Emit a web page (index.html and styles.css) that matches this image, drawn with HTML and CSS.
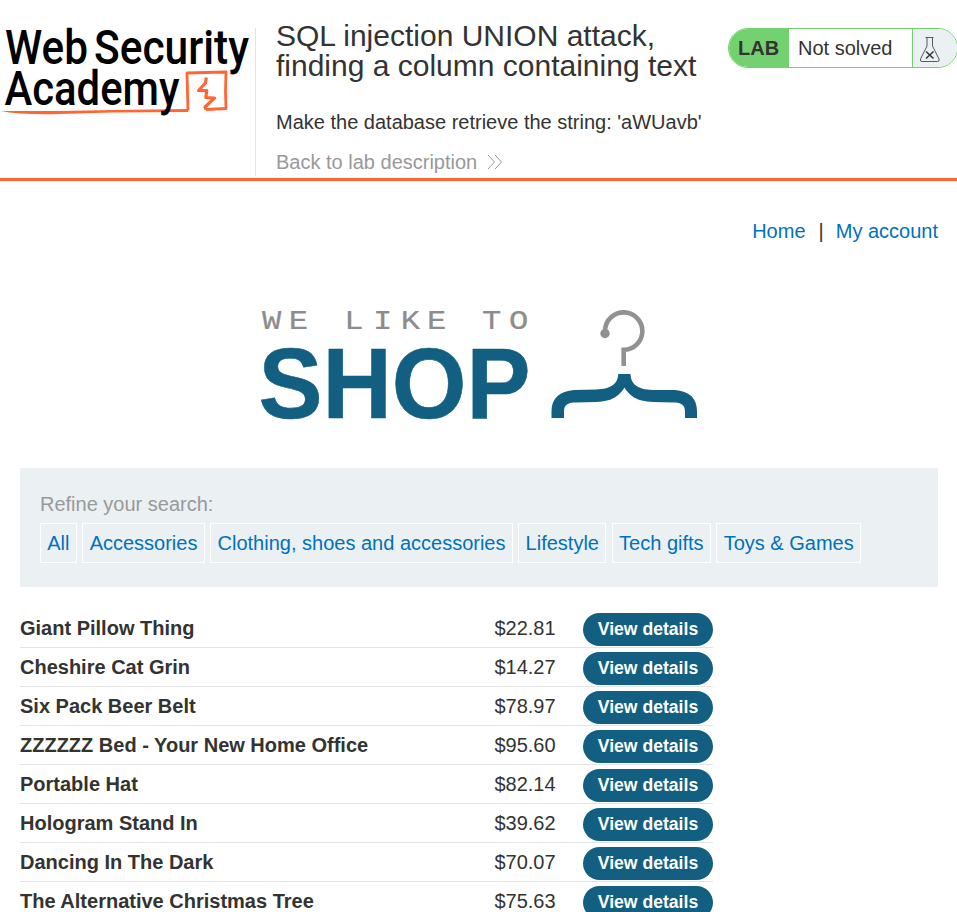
FILE: index.html
```
<!DOCTYPE html>
<html lang="en">
<head>
<meta charset="utf-8">
<title>SQL injection UNION attack, finding a column containing text</title>
<link rel="stylesheet" href="styles.css">
</head>
<body>
<header class="lab-header">
  <svg class="academy-logo" viewBox="0 0 255 100" role="img" aria-label="Web Security Academy">
    <path class="logo-line" d="M188 82.500L187 45L226 44L225.500 63L226 80.500L206 81.500"/>
    <path class="logo-tail" d="M1 83Q20 83 60 83L112 82L188 81V84L112 84.500L60 86Q20 87 1 83Z"/>
    <path class="logo-zag" d="M206.300 49.500L205.500 55L198.500 62.500L206.800 62.500L205.800 69.500L214.500 70.200L205 79L206 81.700"/>
    <g class="logo-text">
      <text x="5" y="36" textLength="83" lengthAdjust="spacingAndGlyphs">Web</text>
      <text x="94" y="36" textLength="155" lengthAdjust="spacingAndGlyphs">Security</text>
      <text x="4.500" y="77" textLength="175" lengthAdjust="spacingAndGlyphs">Academy</text>
    </g>
  </svg>
  <div class="lab-title">
    <h2>SQL injection UNION attack,<br>finding a column containing text</h2>
    <p class="hint">Make the database retrieve the string: 'aWUavb'</p>
    <a class="back">Back to lab description
      <svg viewBox="0 0 16 16"><path d="M1 1L7.500 8L1 15M8 1L14.500 8L8 15"/></svg>
    </a>
  </div>
  <div class="status">
    <span class="status-lab">LAB</span>
    <span class="status-text">Not solved</span>
    <span class="status-icon"><svg viewBox="0 0 22 28"><path class="flask" d="M6.500 1.500H14.500M8 2V10L1.500 23Q.7 25.500 3 25.500H18.500Q20.800 25.500 20 23L13.500 10V2"/><path class="cross" d="M7 15.500L14.500 22.500M14.500 15.500L7 22.500"/></svg></span>
  </div>
</header>
<main>
  <nav class="top-links"><a>Home</a><span>|</span><a>My account</a></nav>
  <svg class="shop-logo" viewBox="0 0 440 112">
    <text class="tagline" transform="scale(1.15 1)" y="20.800" x="1.800 25 42 73.300 98.300 122.300 145.300 163 193 216.500">WE LIKE TO</text>
    <text class="shop" x="-1.500" y="110" textLength="272" lengthAdjust="spacingAndGlyphs">SHOP</text>
    <path class="hook" d="M345 26V22.500A18.700 18.700 0 1 1 363.700 41.800V58"/>
    <circle class="hook-tip" cx="345" cy="25.500" r="4.700"/>
    <path class="hanger" d="M358.200 66H370.500C371 76 377 81.500 393 82L415 82C429 83 437 90 437 103V110H425V104C425 97 422 94.500 413 94.500L393 94C376 93.500 369 87 364.500 79.500C360 87 353 93.500 336 94L316 94.500C307 94.500 304 97 304 104V110H291.500V103C291.500 90 300 83 314 82L336 81.500C352 81 358 75 358.200 66Z"/>
  </svg>
  <section class="filters">
    <label>Refine your search:</label>
    <div class="filter-list"><a>All</a><a>Accessories</a><a>Clothing, shoes and accessories</a><a>Lifestyle</a><a>Tech gifts</a><a>Toys &amp; Games</a></div>
  </section>
  <section class="products">
    <div class="row"><b>Giant Pillow Thing</b><span>$22.81</span><a>View details</a></div>
    <div class="row"><b>Cheshire Cat Grin</b><span>$14.27</span><a>View details</a></div>
    <div class="row"><b>Six Pack Beer Belt</b><span>$78.97</span><a>View details</a></div>
    <div class="row"><b>ZZZZZZ Bed - Your New Home Office</b><span>$95.60</span><a>View details</a></div>
    <div class="row"><b>Portable Hat</b><span>$82.14</span><a>View details</a></div>
    <div class="row"><b>Hologram Stand In</b><span>$39.62</span><a>View details</a></div>
    <div class="row"><b>Dancing In The Dark</b><span>$70.07</span><a>View details</a></div>
    <div class="row"><b>The Alternative Christmas Tree</b><span>$75.63</span><a>View details</a></div>
  </section>
</main>
</body>
</html>
```
FILE: styles.css
```
* { box-sizing: border-box; }
html { height: 100%; overflow: hidden; }
body {
  height: 100%;
  margin: 0;
  overflow: hidden;
  background: #fff;
  color: #333332;
  font: 20px/24px "Liberation Sans", Arial, sans-serif;
}
.lab-header {
  display: flex;
  align-items: flex-start;
  height: 181px;
  padding-top: 28px;
  border-bottom: 3px solid #ff6633;
}
.academy-logo { flex: none; width: 255px; height: 100px; overflow: visible; }
.logo-text { font: 500 48px Roboto, sans-serif; }
.logo-line, .logo-zag { fill: none; stroke: #ff6633; stroke-width: 2.8; stroke-linejoin: round; }
.logo-zag { stroke-width: 3.2; }
.logo-tail { fill: #ff6633; }
.lab-title {
  flex: none;
  width: 473px;
  height: 148px;
  padding-left: 20px;
  border-left: 1px solid #e4e4e4;
}
h2 { margin: -7px 0 0; font-size: 30px; font-weight: 400; line-height: 30px; white-space: nowrap; }
.hint { margin: 29px 0 16px; white-space: nowrap; }
.back { display: flex; align-items: center; gap: 10px; color: #999; }
.back svg { width: 16px; height: 16px; fill: none; stroke: #999; stroke-width: 1; }
.status {
  display: flex;
  flex: none;
  width: 230px;
  height: 40px;
  overflow: hidden;
  border: 1px solid #73d26f;
  border-radius: 20px;
  line-height: 38px;
}
.status-lab { width: 60px; padding-left: 9px; background: #73d26f; font-weight: 700; }
.status-text { width: 123px; padding-left: 9px; }
.status-icon { flex: 1; padding: 7px 0 0 6px; background: #ebf0f3; border-left: 1px solid #73d26f; }
.status-icon svg { display: block; width: 22px; height: 28px; fill: none; stroke: #333332; }
.flask { stroke-width: .8; }
.cross { stroke-width: 1.5; }
main { padding: 38px 19px 0 20px; }
.top-links { display: flex; justify-content: flex-end; color: #333332; }
.top-links span { margin: 0 12px 0 13px; }
.top-links a, .filter-list a { color: #0071bc; }
.shop-logo { display: block; width: 440px; height: 112px; margin: 65px 0 48px 240px; overflow: visible; }
.tagline { font: 28px "Liberation Mono", monospace; fill: #8c8c8c; stroke: #8c8c8c; stroke-width: .2; }
.shop { font: 700 99.500px "Liberation Sans", Arial, sans-serif; fill: #125f82; stroke: #125f82; stroke-width: .6; }
.hook { fill: none; stroke: #8f9193; stroke-width: 4.6; }
.hook-tip { fill: #8f9193; }
.hanger { fill: #125f82; }
.filters { height: 119px; padding: 24px 20px 0; background: #ebf0f3; }
.filters label { display: block; color: #999; }
.filter-list { display: flex; gap: 5.56px; margin-top: 7px; }
.filter-list a { height: 40px; padding: 0 6.29px; border: 1px solid #fff; line-height: 38px; white-space: nowrap; }
.products { width: 693px; margin-top: 22px; }
.row {
  display: grid;
  grid-template-columns: 474.4px 88.6px 130px;
  height: 39px;
  padding-top: 4px;
  border-bottom: 1px solid #e4e4e4;
}
.row b, .row span { line-height: 30px; }
.row a {
  height: 33px;
  border-radius: 17px;
  background: #125f82;
  color: #fff;
  font-size: 17.6px;
  font-weight: 700;
  line-height: 32px;
  text-align: center;
}
```
